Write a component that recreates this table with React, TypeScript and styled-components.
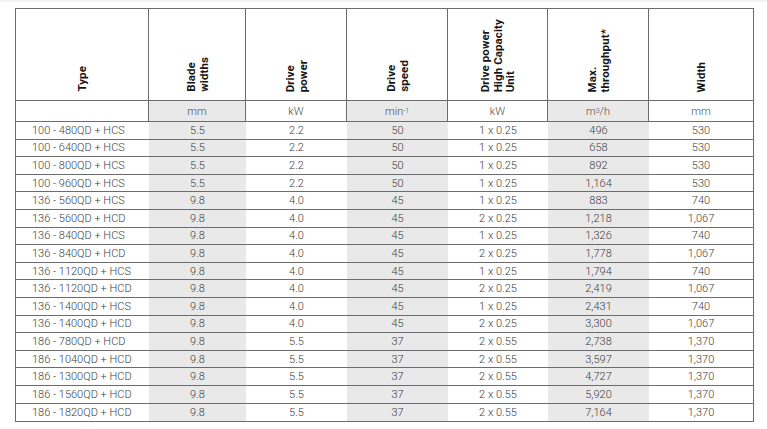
import React from "react";
import styled, { createGlobalStyle } from "styled-components";

const GlobalStyle = createGlobalStyle`
  html, body { margin: 0; padding: 0; background: #ffffff; }
  body { font-family: Roboto, "Liberation Sans", Arial, sans-serif; }
`;

const Page = styled.div`
  box-sizing: border-box;
  width: 767px;
  height: 429px;
  padding: 6px 0 0 15px;
  border-top: 2px solid #f3f3f3;
`;

const Table = styled.div`
  box-sizing: border-box;
  width: 739px;
  border: 1px solid #6c6c6c;
  display: grid;
  grid-template-columns: 133px 97px 101px 101px 100px 101px 1fr;
  grid-template-rows: 92px 21px;
  grid-auto-rows: 17.6px;
`;

const HeaderCell = styled.div<{ $last?: boolean }>`
  box-sizing: border-box;
  display: flex;
  align-items: flex-end;
  justify-content: center;
  padding-bottom: 8px;
  border-bottom: 1px solid #6c6c6c;
  border-right: ${(p) => (p.$last ? "none" : "1px solid #6c6c6c")};
  background: #ffffff;
`;

const HeaderText = styled.span`
  writing-mode: vertical-rl;
  transform: rotate(180deg);
  text-align: left;
  font-family: Roboto, "Liberation Sans", Arial, sans-serif;
  font-weight: 700;
  font-size: 11.5px;
  line-height: 12.5px;
  letter-spacing: 0.1px;
  color: #151515;
  white-space: pre;
`;

const UnitCell = styled.div<{ $shaded?: boolean; $last?: boolean }>`
  box-sizing: border-box;
  display: flex;
  align-items: center;
  justify-content: center;
  border-bottom: 1px solid #6c6c6c;
  border-right: ${(p) => (p.$last ? "none" : "1px solid #6c6c6c")};
  background: ${(p) => (p.$shaded ? "#e9e9e9" : "#ffffff")};
  font-weight: 300;
  font-size: 11px;
  color: #4d4d4d;
`;

const Sup = styled.sup`
  font-size: 7px;
  line-height: 0;
  vertical-align: 4px;
`;

const DataCell = styled.div<{ $shaded?: boolean; $first?: boolean; $lastRow?: boolean }>`
  box-sizing: border-box;
  display: flex;
  align-items: center;
  justify-content: ${(p) => (p.$first ? "flex-start" : "center")};
  padding-left: ${(p) => (p.$first ? "16px" : "0")};
  border-bottom: ${(p) => (p.$lastRow ? "none" : "1px solid #6c6c6c")};
  background: ${(p) => (p.$shaded ? "#e9e9e9" : "#ffffff")};
  font-weight: 300;
  font-size: 11px;
  color: #404040;
  white-space: pre;
`;

const headers = [
  "Type",
  "Blade\nwidths",
  "Drive\npower",
  "Drive\nspeed",
  "Drive power\nHigh Capacity\nUnit",
  "Max.\nthroughput*",
  "Width",
];

const shaded = [false, true, false, true, false, true, false];

const units: React.ReactNode[] = [
  "",
  "mm",
  "kW",
  <>
    min<Sup>-1</Sup>
  </>,
  "kW",
  <>
    m<Sup>3</Sup>/h
  </>,
  "mm",
];

const rows: string[][] = [
  ["100 - 480QD + HCS", "5.5", "2.2", "50", "1 x 0.25", "496", "530"],
  ["100 - 640QD + HCS", "5.5", "2.2", "50", "1 x 0.25", "658", "530"],
  ["100 - 800QD + HCS", "5.5", "2.2", "50", "1 x 0.25", "892", "530"],
  ["100 - 960QD + HCS", "5.5", "2.2", "50", "1 x 0.25", "1,164", "530"],
  ["136 - 560QD + HCS", "9.8", "4.0", "45", "1 x 0.25", "883", "740"],
  ["136 - 560QD + HCD", "9.8", "4.0", "45", "2 x 0.25", "1,218", "1,067"],
  ["136 - 840QD + HCS", "9.8", "4.0", "45", "1 x 0.25", "1,326", "740"],
  ["136 - 840QD + HCD", "9.8", "4.0", "45", "2 x 0.25", "1,778", "1,067"],
  ["136 - 1120QD + HCS", "9.8", "4.0", "45", "1 x 0.25", "1,794", "740"],
  ["136 - 1120QD + HCD", "9.8", "4.0", "45", "2 x 0.25", "2,419", "1,067"],
  ["136 - 1400QD + HCS", "9.8", "4.0", "45", "1 x 0.25", "2,431", "740"],
  ["136 - 1400QD + HCD", "9.8", "4.0", "45", "2 x 0.25", "3,300", "1,067"],
  ["186 - 780QD + HCD", "9.8", "5.5", "37", "2 x 0.55", "2,738", "1,370"],
  ["186 - 1040QD + HCD", "9.8", "5.5", "37", "2 x 0.55", "3,597", "1,370"],
  ["186 - 1300QD + HCD", "9.8", "5.5", "37", "2 x 0.55", "4,727", "1,370"],
  ["186 - 1560QD + HCD", "9.8", "5.5", "37", "2 x 0.55", "5,920", "1,370"],
  ["186 - 1820QD + HCD", "9.8", "5.5", "37", "2 x 0.55", "7,164", "1,370"],
];

export default function App() {
  return (
    <>
      <GlobalStyle />
      <Page>
        <Table>
          {headers.map((h, i) => (
            <HeaderCell key={"h" + i} $last={i === headers.length - 1}>
              <HeaderText>{h}</HeaderText>
            </HeaderCell>
          ))}
          {units.map((u, i) => (
            <UnitCell key={"u" + i} $shaded={shaded[i]} $last={i === units.length - 1}>
              {u}
            </UnitCell>
          ))}
          {rows.map((r, ri) =>
            r.map((c, ci) => (
              <DataCell
                key={ri + "-" + ci}
                $shaded={shaded[ci]}
                $first={ci === 0}
                $lastRow={ri === rows.length - 1}
              >
                {c}
              </DataCell>
            ))
          )}
        </Table>
      </Page>
    </>
  );
}
